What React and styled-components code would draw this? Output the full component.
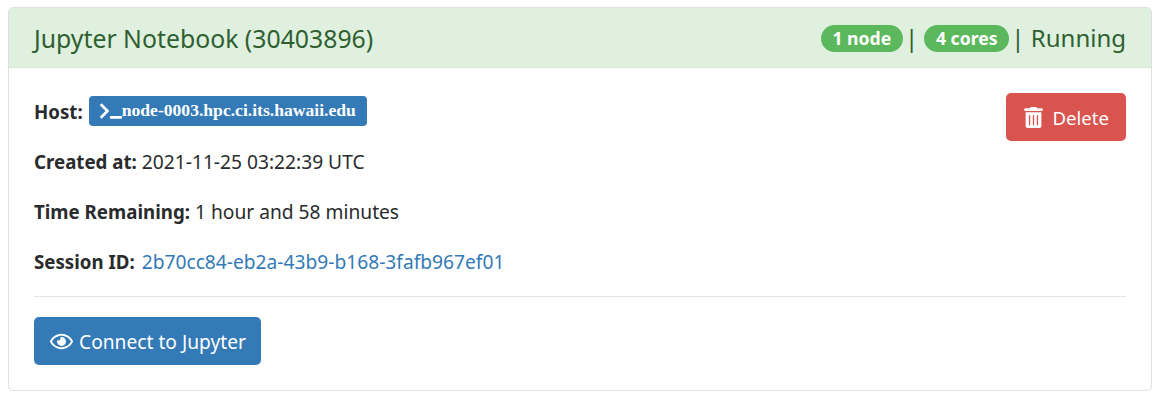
import React from "react";
import styled, { createGlobalStyle } from "styled-components";
import { FaRegEye, FaTerminal, FaTrashAlt } from "react-icons/fa";

const Global = createGlobalStyle`
  html, body { margin: 0; background: #fff; }
  body { font-family: "Noto Sans", "Open Sans", sans-serif; color: #292b2c; }
`;
const Page = styled.div`
  padding: 7px 13px 15px 8px;
`;
const Card = styled.section`
  border: 1px solid #dfdfdf;
  border-radius: 5px;
  overflow: hidden;
  height: 384px;
  box-sizing: border-box;
`;
const Header = styled.header`
  height: 60px;
  box-sizing: border-box;
  background: #dff0de;
  border-bottom: 1px solid #d8e8d8;
  color: #2f5f30;
  padding: 0 25px;
  display: flex;
  justify-content: space-between;
  align-items: center;
`;
const Title = styled.h5`
  margin: 0;
  font-size: 24.8px;
  font-weight: 400;
  line-height: 30px;
`;
const Status = styled.div`
  display: flex;
  align-items: center;
  gap: 2px;
  font-size: 24px;
  line-height: 30px;
`;
const Pill = styled.span`
  background: #5cb85c;
  color: #fff;
  border-radius: 14px;
  font-size: 17.6px;
  font-weight: 700;
  height: 27px;
  line-height: 27px;
  padding: 0 11.8px;
  margin: 2px 0 0 ${(p) => (p.$afterBar ? "4px" : "0")};
`;
const Body = styled.div`
  padding: 31px 25px 0;
`;
const Top = styled.div`
  display: flex;
  justify-content: space-between;
  align-items: flex-start;
  margin-bottom: -3px;
`;
const Details = styled.div``;
const Line = styled.p`
  margin: 0 0 25px;
  font-size: 19.2px;
  line-height: 25px;
  height: 25px;
  display: flex;
  align-items: center;
  gap: 5px;
`;
const Label = styled.strong`
  font-weight: 700;
  font-size: 18.7px;
`;
const HostBadge = styled.span`
  display: inline-flex;
  align-items: center;
  height: 30px;
  box-sizing: border-box;
  background: #337ab7;
  color: #fff;
  border-radius: 4px;
  padding: 0 11px;
  margin: 0 0 2px 1px;
  font-family: "Liberation Serif", serif;
  font-size: 17.6px;
  font-weight: 700;
`;
const SessionLink = styled.a`
  color: #337ab7;
  text-decoration: none;
  margin-left: 2px;
`;
const Button = styled.a`
  display: inline-flex;
  align-items: center;
  gap: 6px;
  height: 48px;
  box-sizing: border-box;
  border-radius: 5px;
  color: #fff;
  font-size: 19.2px;
  padding: 0 15px 0 16px;
  background: ${(p) => p.$bg};
`;
const DeleteButton = styled(Button)`
  margin-top: -6px;
  gap: 8px;
  font-size: 18.6px;
  padding: 0 17px 0 17px;
`;
const Rule = styled.hr`
  margin: 0 0 20px;
  border: 0;
  border-top: 1px solid #e5e5e5;
`;

export default function App() {
  return (
    <Page>
      <Global />
      <Card>
        <Header>
          <Title>Jupyter Notebook (30403896)</Title>
          <Status>
            <Pill>1 node</Pill>|<Pill $afterBar>4 cores</Pill>| Running
          </Status>
        </Header>
        <Body>
          <Top>
            <Details>
              <Line>
                <Label>Host:</Label>
                <HostBadge>
                  <FaTerminal size={22} />
                  node-0003.hpc.ci.its.hawaii.edu
                </HostBadge>
              </Line>
              <Line>
                <Label>Created at:</Label> 2021-11-25 03:22:39 UTC
              </Line>
              <Line>
                <Label>Time Remaining:</Label> 1 hour and 58 minutes
              </Line>
              <Line>
                <Label>Session ID:</Label>
                <SessionLink>2b70cc84-eb2a-43b9-b168-3fafb967ef01</SessionLink>
              </Line>
            </Details>
            <DeleteButton $bg="#d9534f">
              <FaTrashAlt size={21} />
              Delete
            </DeleteButton>
          </Top>
          <Rule />
          <Button $bg="#337ab7">
            <FaRegEye size={23} />
            Connect to Jupyter
          </Button>
        </Body>
      </Card>
    </Page>
  );
}
